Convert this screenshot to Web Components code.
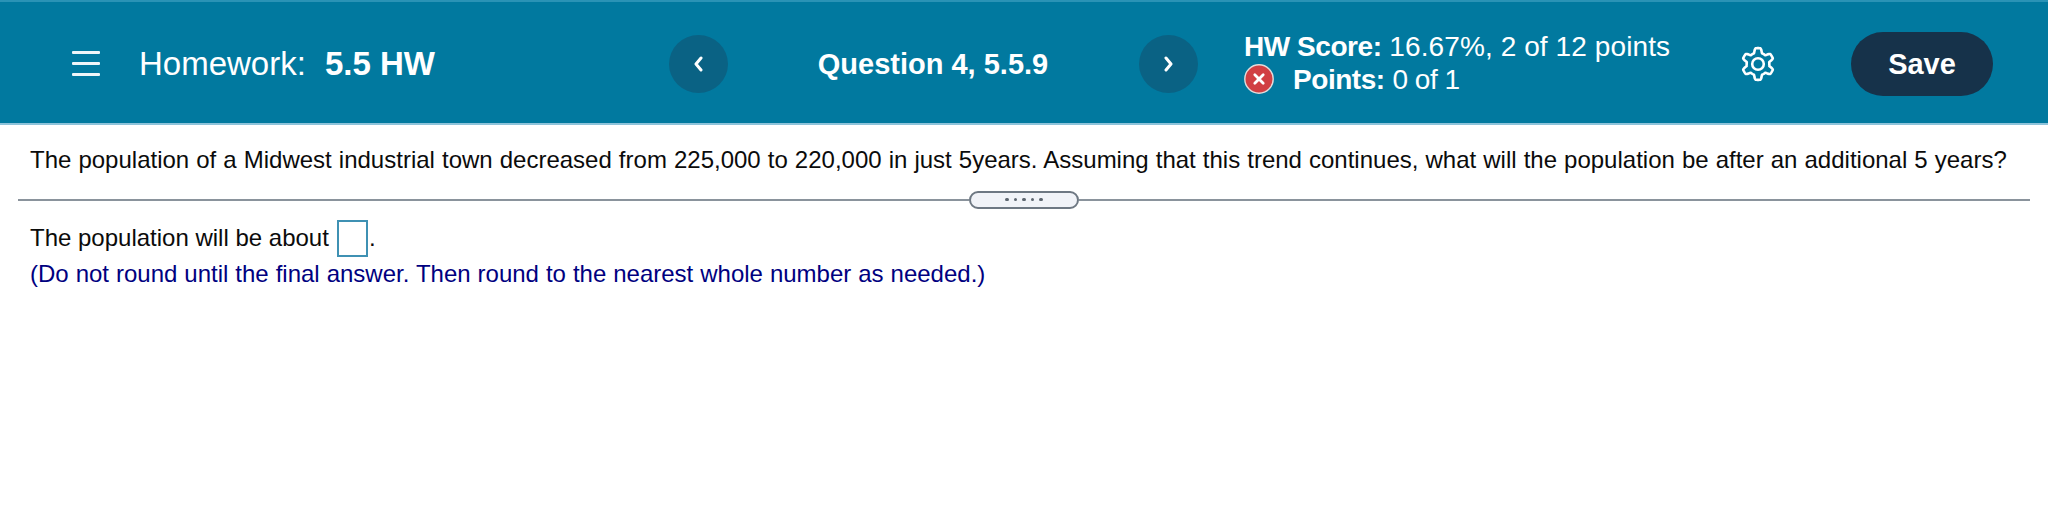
<!DOCTYPE html>
<html>
<head>
<meta charset="utf-8">
<title>Homework 5.5 HW</title>
<style>
    html, body { margin: 0; background: #fff; }
    body { font-family: "Liberation Sans", Arial, sans-serif; }
</style>
</head>
<body>
<hw-page>
    <hw-header>
        <menu-icon></menu-icon>
        <hw-title>Homework:<b>5.5 HW</b></hw-title>
        <nav-button dir="prev"></nav-button>
        <question-label>Question 4, 5.5.9</question-label>
        <nav-button dir="next"></nav-button>
        <score-block></score-block>
        <gear-icon></gear-icon>
        <save-button>Save</save-button>
    </hw-header>
    <question-pane>
        <span slot="question">The population of a Midwest industrial town decreased from 225,000 to 220,000 in just 5years. Assuming that this trend continues, what will the population be after an additional 5 years?</span>
        <span slot="answer">The population will be about</span>
        <span slot="hint">(Do not round until the final answer. Then round to the nearest whole number as needed.)</span>
    </question-pane>
</hw-page>

<script>
class HwPage extends HTMLElement {
    constructor() {
        super();
        this.attachShadow({mode: 'open'}).innerHTML = `
<style>
    :host { display: block; width: 2048px; height: 505px; overflow: hidden; background: #fff; }
</style>
<slot></slot>`;
    }
}

class HwHeader extends HTMLElement {
    constructor() {
        super();
        this.attachShadow({mode: 'open'}).innerHTML = `
<style>
    :host {
        display: flex;
        align-items: center;
        box-sizing: border-box;
        height: 125px;
        padding: 3px 0 0 72px;
        background: #01799f;
        border-top: 2px solid #2a93b6;
        border-bottom: 2px solid #8ec3da;
        color: #fff;
    }
</style>
<slot></slot>`;
    }
}

class MenuIcon extends HTMLElement {
    constructor() {
        super();
        this.attachShadow({mode: 'open'}).innerHTML = `
<style>
    :host { display: block; width: 67px; height: 25px; margin-top: -2px; }
    svg { display: block; }
</style>
<svg width="28" height="25" viewBox="0 0 28 25" fill="#eef6f9">
    <rect y="0" width="28" height="3" rx="1"/>
    <rect y="11" width="28" height="3" rx="1"/>
    <rect y="22" width="28" height="3" rx="1"/>
</svg>`;
    }
}

class HwTitle extends HTMLElement {
    constructor() {
        super();
        this.attachShadow({mode: 'open'}).innerHTML = `
<style>
    :host { display: block; width: 530px; font-size: 33px; white-space: nowrap; }
    ::slotted(b) { margin-left: 19px; }
</style>
<slot></slot>`;
    }
}

class NavButton extends HTMLElement {
    constructor() {
        super();
        let points = this.getAttribute('dir') == 'prev' ? '8,2 3,8 8,14' : '3,2 8,8 3,14';
        this.attachShadow({mode: 'open'}).innerHTML = `
<style>
    :host {
        display: flex;
        flex: none;
        align-items: center;
        justify-content: center;
        width: 59px;
        height: 58px;
        border-radius: 50%;
        background: #0a6284;
    }
</style>
<svg width="11" height="16" viewBox="0 0 11 16" fill="none" stroke="#fff" stroke-width="3" stroke-linecap="round" stroke-linejoin="round">
    <polyline points="${points}"/>
</svg>`;
    }
}

class QuestionLabel extends HTMLElement {
    constructor() {
        super();
        this.attachShadow({mode: 'open'}).innerHTML = `
<style>
    :host { display: block; width: 411px; padding-right: 1px; box-sizing: border-box; text-align: center; font-size: 29px; font-weight: bold; white-space: nowrap; }
</style>
<slot></slot>`;
    }
}

class ScoreBlock extends HTMLElement {
    constructor() {
        super();
        this.attachShadow({mode: 'open'}).innerHTML = `
<style>
    :host { display: block; width: 497px; margin: -3px 0 0 46px; font-size: 28px; line-height: 33px; white-space: nowrap; }
    .points { display: flex; align-items: center; gap: 19px; }
    svg { display: block; flex: none; }
    b { letter-spacing: -0.45px; }
    .score { letter-spacing: 0.1px; }
    .of { letter-spacing: -0.5px; }
</style>
<div><b>HW Score:</b> <span class="score">16.67%, 2 of 12 points</span></div>
<div class="points">
    <svg width="30" height="30" viewBox="0 0 30 30">
        <circle cx="15" cy="15" r="14.2" fill="#d13f43" stroke="#e3dcdc" stroke-width="1.4"/>
        <path d="M10.8 10.8l8.4 8.4M19.2 10.8l-8.4 8.4" stroke="#fff" stroke-width="2.8" stroke-linecap="round"/>
    </svg>
    <span><b>Points:</b> <span class="of">0 of 1</span></span>
</div>`;
    }
}

class GearIcon extends HTMLElement {
    constructor() {
        super();
        // six rounded lobes, one straight up
        let d = '';
        for (let i = 0; i < 120; i++) {
            let a = i / 120 * 2 * Math.PI;
            let r = 13.6 + 3 * Math.max(-0.75, Math.min(0.75, Math.cos(6 * a) * 1.5));
            let x = 18 + r * Math.sin(a);
            let y = 18 - r * Math.cos(a);
            d += (i ? 'L' : 'M') + x.toFixed(2) + ' ' + y.toFixed(2);
        }
        this.attachShadow({mode: 'open'}).innerHTML = `
<style>
    :host { display: block; width: 36px; height: 36px; margin-top: -1px; margin-left: -1px; }
    svg { display: block; }
</style>
<svg width="36" height="36" viewBox="0 0 36 36" fill="none" stroke="#fff" stroke-width="2.6" stroke-linejoin="round">
    <path d="${d}Z"/>
    <circle cx="18" cy="18" r="5.8"/>
</svg>`;
    }
}

class SaveButton extends HTMLElement {
    constructor() {
        super();
        this.attachShadow({mode: 'open'}).innerHTML = `
<style>
    :host {
        display: flex;
        align-items: center;
        justify-content: center;
        width: 142px;
        height: 64px;
        margin-left: 75px;
        border-radius: 32px;
        background: #16324a;
        font-size: 29px;
        font-weight: bold;
    }
</style>
<slot></slot>`;
    }
}

class DividerHandle extends HTMLElement {
    constructor() {
        super();
        this.attachShadow({mode: 'open'}).innerHTML = `
<style>
    :host {
        display: flex;
        align-items: center;
        justify-content: center;
        height: 17px;
        margin: 0 18px;
    }
    .rule { flex: 1; height: 2px; background: #8a939c; }
    .grip {
        display: flex;
        align-items: center;
        justify-content: center;
        gap: 5px;
        box-sizing: border-box;
        width: 110px;
        height: 18px;
        border: 2px solid #6e7883;
        border-radius: 9px;
        background: #f1f3f8;
    }
    .grip i { width: 3.5px; height: 3.5px; border-radius: 50%; background: #5d6670; }
</style>
<div class="rule"></div>
<div class="grip"><i></i><i></i><i></i><i></i><i></i></div>
<div class="rule"></div>`;
    }
}

class AnswerBox extends HTMLElement {
    constructor() {
        super();
        this.attachShadow({mode: 'open'}).innerHTML = `
<style>
    :host {
        display: inline-block;
        box-sizing: border-box;
        width: 31px;
        height: 37px;
        margin: 0 1px 0 8px;
        border: 2px solid #3f91b3;
        background: #fff;
        vertical-align: -11px;
    }
</style>`;
    }
}

class QuestionPane extends HTMLElement {
    constructor() {
        super();
        this.attachShadow({mode: 'open'}).innerHTML = `
<style>
    :host { display: block; font-size: 24px; color: #0b0b0b; }
    .question { padding: 20px 0 16px 30px; line-height: 30px; white-space: nowrap; word-spacing: 0.4px; }
    .answer { padding: 11px 0 0 30px; line-height: 37px; white-space: nowrap; }
    .hint { padding: 2px 0 0 30px; line-height: 30px; color: #00007f; white-space: nowrap; word-spacing: 0.3px; }
</style>
<div class="question"><slot name="question"></slot></div>
<divider-handle></divider-handle>
<div class="answer"><slot name="answer"></slot><answer-box></answer-box>.</div>
<div class="hint"><slot name="hint"></slot></div>`;
    }
}

window.customElements.define('hw-page', HwPage);
window.customElements.define('hw-header', HwHeader);
window.customElements.define('menu-icon', MenuIcon);
window.customElements.define('hw-title', HwTitle);
window.customElements.define('nav-button', NavButton);
window.customElements.define('question-label', QuestionLabel);
window.customElements.define('score-block', ScoreBlock);
window.customElements.define('gear-icon', GearIcon);
window.customElements.define('save-button', SaveButton);
window.customElements.define('divider-handle', DividerHandle);
window.customElements.define('answer-box', AnswerBox);
window.customElements.define('question-pane', QuestionPane);
</script>
</body>
</html>
